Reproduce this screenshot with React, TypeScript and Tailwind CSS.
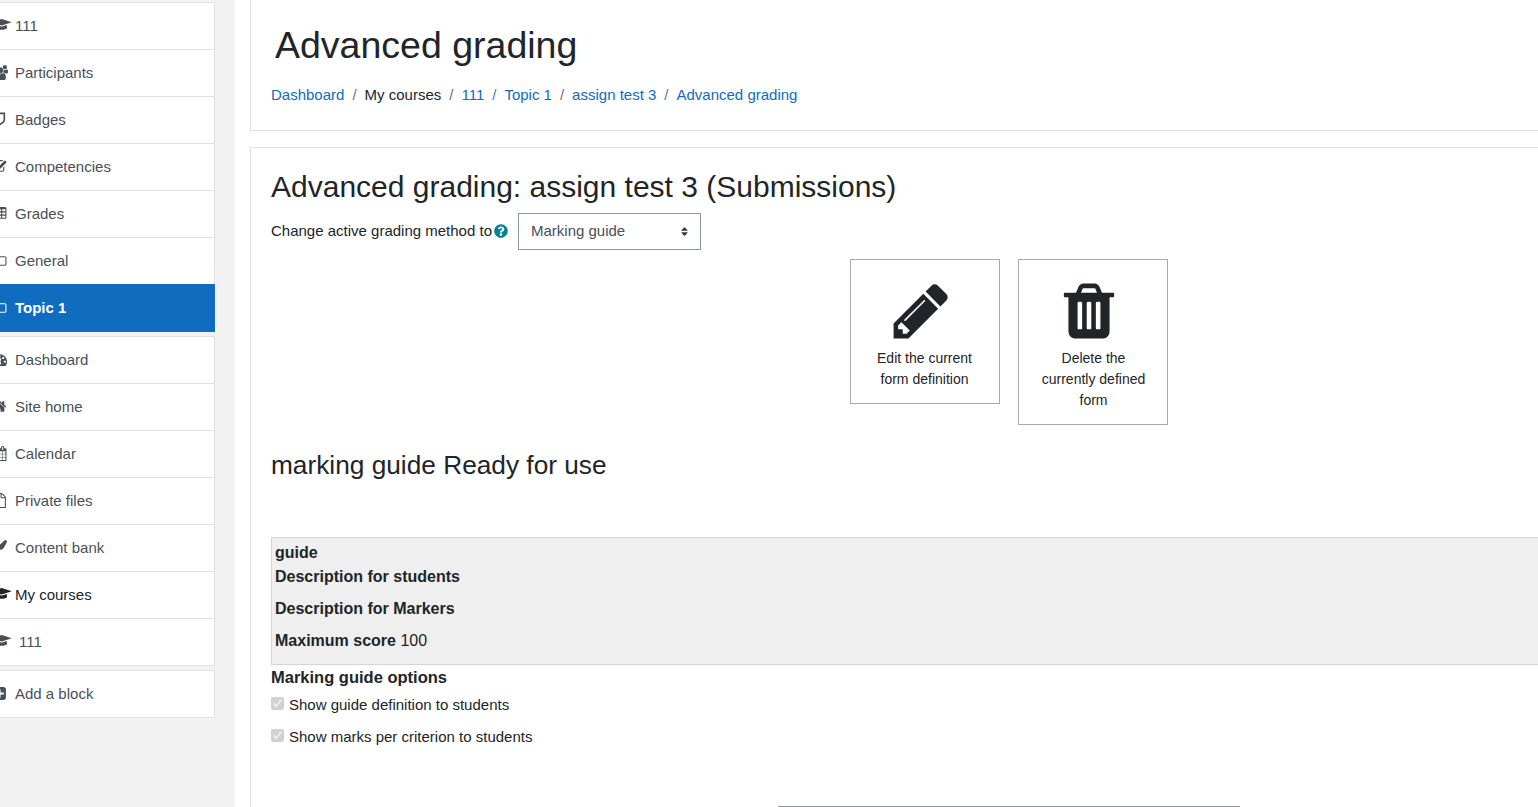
import { FaQuestionCircle, FaSort } from "react-icons/fa";

// glyphs keep the Font Awesome 4 grid (1792 high), w is the advance width
const glyphs: Record<string, { w: number; d: string }> = {
  cap: {
    w: 2304,
    d: "M1774 836l18 316q4 69-82 128t-235 93.5-323 34.5-323-34.5-235-93.5-82-128l18-316 574 181q22 7 48 7t48-7zm530-324q0 23-22 31l-1120 352q-4 1-10 1t-10-1l-652-206q-43 34-71 111.5t-34 178.5q63 36 63 109 0 69-58 107l58 433q2 14-8 25-9 11-24 11h-192q-15 0-24-11-10-11-8-25l58-433q-58-38-58-107 0-73 65-111 11-207 98-330l-333-104q-22-8-22-31t22-31l1120-352q4-1 10-1t10 1l1120 352q22 8 22 31z",
  },
  users: {
    w: 1920,
    d: "M593 896q-162 5-265 128h-134q-82 0-138-40.5t-56-118.5q0-353 124-353 6 0 43.5 21t97.5 42.5 119 21.5q67 0 133-23-5 37-5 66 0 139 81 256zm1071 637q0 120-73 189.5t-194 69.5h-874q-121 0-194-69.5t-73-189.5q0-53 3.5-103.5t14-109 26.5-108.5 43-97.5 62-81 85.5-53.5 111.5-20q10 0 43 21.5t73 48 107 48 135 21.5 135-21.5 107-48 73-48 43-21.5q61 0 111.5 20t85.5 53.5 62 81 43 97.5 26.5 108.5 14 109 3.5 103.5zm-1024-1277q0 106-75 181t-181 75-181-75-75-181 75-181 181-75 181 75 75 181zm704 384q0 159-112.5 271.5t-271.5 112.5-271.5-112.5-112.5-271.5 112.5-271.5 271.5-112.5 271.5 112.5 112.5 271.5zm576 225q0 78-56 118.5t-138 40.5h-134q-103-123-265-128 81-117 81-256 0-29-5-66 66 23 133 23 59 0 119-21.5t97.5-42.5 43.5-21q124 0 124 353zm-128-609q0 106-75 181t-181 75-181-75-75-181 75-181 181-75 181 75 75 181z",
  },
  shield: {
    w: 1792,
    d: "M1376 896v-640h-448v1137q119-63 213-137 235-184 235-360zm192-768v768q0 86-33.5 170.5t-83 150-118 127.5-126.5 103-121 77.5-89.5 49.5-42.5 20q-12 6-26 6t-26-6q-16-7-42.5-20t-89.5-49.5-121-77.5-126.5-103-118-127.5-83-150-33.5-170.5v-768q0-26 19-45t45-19h1152q26 0 45 19t19 45z",
  },
  check: {
    w: 1792,
    d: "M1472 930v318q0 119-84.5 203.5t-203.5 84.5h-832q-119 0-203.5-84.5t-84.5-203.5v-832q0-119 84.5-203.5t203.5-84.5h832q63 0 117 25 15 7 18 23 3 17-9 29l-49 49q-10 10-23 10-3 0-9-2-23-6-45-6h-832q-66 0-113 47t-47 113v832q0 66 47 113t113 47h832q66 0 113-47t47-113v-254q0-13 9-22l64-64q10-10 23-10 6 0 12 3 20 8 20 29zm231-489l-814 814q-24 24-57 24t-57-24l-430-430q-24-24-24-57t24-57l110-110q24-24 57-24t57 24l263 263 647-647q24-24 57-24t57 24l110 110q24 24 24 57t-24 57z",
  },
  table: {
    w: 1792,
    d: "M576 1376v-192q0-14-9-23t-23-9h-320q-14 0-23 9t-9 23v192q0 14 9 23t23 9h320q14 0 23-9t9-23zm0-384v-192q0-14-9-23t-23-9h-320q-14 0-23 9t-9 23v192q0 14 9 23t23 9h320q14 0 23-9t9-23zm512 384v-192q0-14-9-23t-23-9h-320q-14 0-23 9t-9 23v192q0 14 9 23t23 9h320q14 0 23-9t9-23zm-512-768v-192q0-14-9-23t-23-9h-320q-14 0-23 9t-9 23v192q0 14 9 23t23 9h320q14 0 23-9t9-23zm512 384v-192q0-14-9-23t-23-9h-320q-14 0-23 9t-9 23v192q0 14 9 23t23 9h320q14 0 23-9t9-23zm512 384v-192q0-14-9-23t-23-9h-320q-14 0-23 9t-9 23v192q0 14 9 23t23 9h320q14 0 23-9t9-23zm-512-768v-192q0-14-9-23t-23-9h-320q-14 0-23 9t-9 23v192q0 14 9 23t23 9h320q14 0 23-9t9-23zm512 384v-192q0-14-9-23t-23-9h-320q-14 0-23 9t-9 23v192q0 14 9 23t23 9h320q14 0 23-9t9-23zm0-384v-192q0-14-9-23t-23-9h-320q-14 0-23 9t-9 23v192q0 14 9 23t23 9h320q14 0 23-9t9-23zm128-320v1088q0 66-47 113t-113 47h-1344q-66 0-113-47t-47-113v-1088q0-66 47-113t113-47h1344q66 0 113 47t47 113z",
  },
  folder: {
    w: 1792,
    d: "M1600 1312v-704q0-40-28-68t-68-28h-704q-40 0-68-28t-28-68v-64q0-40-28-68t-68-28h-320q-40 0-68 28t-28 68v960q0 40 28 68t68 28h1216q40 0 68-28t28-68zm128-704v704q0 92-66 158t-158 66h-1216q-92 0-158-66t-66-158v-960q0-92 66-158t158-66h320q92 0 158 66t66 158v32h672q92 0 158 66t66 158z",
  },
  gauge: {
    w: 1792,
    d: "M384 1152q0-53-37.5-90.5t-90.5-37.5-90.5 37.5-37.5 90.5 37.5 90.5 90.5 37.5 90.5-37.5 37.5-90.5zm192-448q0-53-37.5-90.5t-90.5-37.5-90.5 37.5-37.5 90.5 37.5 90.5 90.5 37.5 90.5-37.5 37.5-90.5zm428 481l101-382q6-26-7.5-48.5t-38.5-29.5-48 6.5-30 39.5l-101 382q-60 5-107 43.5t-63 98.5q-20 77 20 146t117 89 146-20 89-117q16-60-6-117t-72-91zm660-33q0-53-37.5-90.5t-90.5-37.5-90.5 37.5-37.5 90.5 37.5 90.5 90.5 37.5 90.5-37.5 37.5-90.5zm-640-640q0-53-37.5-90.5t-90.5-37.5-90.5 37.5-37.5 90.5 37.5 90.5 90.5 37.5 90.5-37.5 37.5-90.5zm448 192q0-53-37.5-90.5t-90.5-37.5-90.5 37.5-37.5 90.5 37.5 90.5 90.5 37.5 90.5-37.5 37.5-90.5zm320 448q0 261-141 483-19 29-54 29h-1402q-35 0-54-29-141-221-141-483 0-182 71-348t191-286 286-191 348-71 348 71 286 191 191 286 71 348z",
  },
  home: {
    w: 1792,
    d: "M1472 992v480q0 26-19 45t-45 19h-384v-384h-256v384h-384q-26 0-45-19t-19-45v-480q0-1 .5-3t.5-3l575-474 575 474q1 2 1 6zm223-69l-62 74q-8 9-21 11h-3q-13 0-21-7l-692-577-692 577q-12 8-24 7-13-2-21-11l-62-74q-8-10-7-23.5t11-21.5l719-599q32-26 76-26t76 26l244 204v-195q0-14 9-23t23-9h192q14 0 23 9t9 23v408l219 182q10 8 11 21.5t-7 23.5z",
  },
  calendar: {
    w: 1792,
    d: "M192 1664h288v-288h-288v288zm352 0h320v-288h-320v288zm-352-352h288v-320h-288v320zm352 0h320v-320h-320v320zm-352-384h288v-288h-288v288zm736 736h320v-288h-320v288zm-384-736h320v-288h-320v288zm768 736h288v-288h-288v288zm-384-352h320v-320h-320v320zm-352-864v-288q0-13-9.5-22.5t-22.5-9.5h-64q-13 0-22.5 9.5t-9.5 22.5v288q0 13 9.5 22.5t22.5 9.5h64q13 0 22.5-9.5t9.5-22.5zm736 864h288v-320h-288v320zm-384-384h320v-288h-320v288zm384 0h288v-288h-288v288zm32-480v-288q0-13-9.5-22.5t-22.5-9.5h-64q-13 0-22.5 9.5t-9.5 22.5v288q0 13 9.5 22.5t22.5 9.5h64q13 0 22.5-9.5t9.5-22.5zm384-64v1280q0 52-38 90t-90 38h-1408q-52 0-90-38t-38-90v-1280q0-52 38-90t90-38h128v-96q0-66 47-113t113-47h64q66 0 113 47t47 113v96h384v-96q0-66 47-113t113-47h64q66 0 113 47t47 113v96h128q52 0 90 38t38 90z",
  },
  file: {
    w: 1792,
    d: "M1596 380q28 28 48 76t20 88v1152q0 40-28 68t-68 28h-1344q-40 0-68-28t-28-68v-1600q0-40 28-68t68-28h896q40 0 88 20t76 48zm-444-244v376h376q-10-29-22-41l-313-313q-12-12-41-22zm384 1528v-1024h-416q-40 0-68-28t-28-68v-416h-768v1536h1280z",
  },
  brush: {
    w: 1792,
    d: "M1615 0q70 0 122.5 46.5t52.5 116.5q0 63-45 151-332 629-465 752-97 91-218 91-126 0-216.5-92.5t-90.5-219.5q0-128 92-212l638-579q59-54 130-54zm-909 1034q39 76 106.5 130t150.5 76l1 71q4 213-129.5 347t-348.5 134q-123 0-218-46.5t-152.5-127.5-86.5-183-29-220q7 5 41 30t62 44.5 59 36.5 46 17q41 0 55-37 25-66 57.5-112.5t69.5-76 88-47.5 103-25.5 125-10.5z",
  },
  plus: {
    w: 1792,
    d: "M1408 960v-128q0-26-19-45t-45-19h-320v-320q0-26-19-45t-45-19h-128q-26 0-45 19t-19 45v320h-320q-26 0-45 19t-19 45v128q0 26 19 45t45 19h320v320q0 26 19 45t45 19h128q26 0 45-19t19-45v-320h320q26 0 45-19t19-45zm256-544v960q0 119-84.5 203.5t-203.5 84.5h-960q-119 0-203.5-84.5t-84.5-203.5v-960q0-119 84.5-203.5t203.5-84.5h960q119 0 203.5 84.5t84.5 203.5z",
  },
};

const Glyph = ({ name }: { name: string }) => {
  const g = glyphs[name];
  return (
    <svg
      viewBox={`0 0 ${g.w} 1792`}
      height={15}
      width={(g.w * 15) / 1792}
      fill="currentColor"
      className="shrink-0 -translate-y-[1px] overflow-visible"
    >
      <path d={g.d} />
    </svg>
  );
};

interface NavItem {
  label: string;
  icon: string;
  dark?: boolean;
  wide?: boolean;
}

const courseItems: NavItem[] = [
  { label: "111", icon: "cap" },
  { label: "Participants", icon: "users" },
  { label: "Badges", icon: "shield" },
  { label: "Competencies", icon: "check" },
  { label: "Grades", icon: "table" },
  { label: "General", icon: "folder" },
];

const siteItems: NavItem[] = [
  { label: "Dashboard", icon: "gauge" },
  { label: "Site home", icon: "home" },
  { label: "Calendar", icon: "calendar" },
  { label: "Private files", icon: "file" },
  { label: "Content bank", icon: "brush" },
  { label: "My courses", icon: "cap", dark: true },
  { label: "111", icon: "cap", wide: true },
];

const crumbs = ["Dashboard", "My courses", "111", "Topic 1", "assign test 3", "Advanced grading"];

const Row = ({ item }: { item: NavItem }) => (
  <div className="flex h-[47px] items-center border-b border-[#dee2e6] pl-[11px] text-[#495057] last:h-[46px] last:border-b-0">
    <span className={`flex shrink-0 ${item.wide ? "w-[27px]" : "w-[23px]"} ${item.dark ? "text-[#212529]" : ""}`}>
      <Glyph name={item.icon} />
    </span>
    <span className={item.dark ? "text-[#212529]" : ""}>{item.label}</span>
  </div>
);

const Sidebar = () => (
  <aside className="h-full w-[235px] shrink-0 overflow-hidden bg-[#f2f2f2] pt-[2px] text-[15px]">
    <div className="-ml-[20px] w-[235px]">
      <div className="border border-b-0 border-[#dee2e6] bg-white">
        {courseItems.map((item, i) => (
          <div key={i} className="flex h-[47px] items-center border-b border-[#dee2e6] pl-[11px] text-[#495057]">
            <span className="flex w-[23px] shrink-0">
              <Glyph name={item.icon} />
            </span>
            {item.label}
          </div>
        ))}
        <div className="-mx-px -mt-px flex h-[48px] items-center bg-[#0f6cbf] pl-[12px] font-bold text-white">
          <span className="flex w-[23px] shrink-0">
            <Glyph name="folder" />
          </span>
          Topic 1
        </div>
      </div>
      <div className="mt-[4px] border border-[#dee2e6] bg-white">
        {siteItems.map((item, i) => (
          <Row key={i} item={item} />
        ))}
      </div>
      <div className="mt-[4px] border border-[#dee2e6] bg-white">
        <div className="flex h-[46px] items-center pl-[11px] text-[#495057]">
          <span className="flex w-[23px] shrink-0">
            <Glyph name="plus" />
          </span>
          Add a block
        </div>
      </div>
    </div>
  </aside>
);

const PencilIcon = () => (
  <svg viewBox="0 0 1792 1792" className="h-[64px] w-[64px] -translate-x-[4px]" fill="#212529">
    <path d="M491 1536l91-91-235-235-91 91v107h128v128h107zm523-928q0-22-22-22-10 0-17 7l-542 542q-7 7-7 17 0 22 22 22 10 0 17-7l542-542q7-7 7-17zm-54-192l416 416-832 832h-416v-416zm683 96q0 53-37 90l-166 166-416-416 166-165q36-38 90-38 53 0 91 38l235 234q37 39 37 91z" />
  </svg>
);

const TrashIcon = () => (
  <svg viewBox="0 0 1792 1792" className="h-[64px] w-[64px] -translate-x-[5px]" fill="#212529">
    <path d="M704 1376v-704q0-14-9-23t-23-9h-64q-14 0-23 9t-9 23v704q0 14 9 23t23 9h64q14 0 23-9t9-23zm256 0v-704q0-14-9-23t-23-9h-64q-14 0-23 9t-9 23v704q0 14 9 23t23 9h64q14 0 23-9t9-23zm256 0v-704q0-14-9-23t-23-9h-64q-14 0-23 9t-9 23v704q0 14 9 23t23 9h64q14 0 23-9t9-23zm-544-992h448l-48-117q-7-9-17-11h-317q-10 2-17 11zm928 32v64q0 14-9 23t-23 9h-96v948q0 83-47 143.5t-113 60.5h-832q-66 0-113-58.5t-47-141.5v-952h-96q-14 0-23-9t-9-23v-64q0-14 9-23t23-9h309l70-167q15-37 54-63t79-26h320q40 0 79 26t54 63l70 167h309q14 0 23 9t9 23z" />
  </svg>
);

const App = () => {
  return (
    <div className="flex h-[807px] w-[1538px] overflow-hidden bg-white font-['Liberation_Sans',sans-serif] text-[#212529]">
      <Sidebar />
      <main className="ml-[15px] w-[1520px] shrink-0">
        <header className="h-[131px] border border-t-0 border-[#dee2e6] pl-[24px] pt-[23px]">
          <h1 className="text-[37.5px] leading-[45px]">Advanced grading</h1>
          <nav className="-ml-[4px] mt-[16px] flex items-center text-[15px] leading-[22px]">
            {crumbs.map((c, i) => (
              <span key={c} className="flex items-center">
                {i > 0 && <span className="px-[8px] text-[#6a737b]">/</span>}
                <span className={i === 1 ? "text-[#212529]" : "text-[#0f6cbf]"}>{c}</span>
              </span>
            ))}
          </nav>
        </header>

        <section className="mt-[16px] h-[700px] border border-[#dee2e6] px-[20px] pt-[21px]">
          <h2 className="text-[30px] leading-[36px]">Advanced grading: assign test 3 (Submissions)</h2>
          <div className="mt-[8px] flex items-center text-[15px]">
            <span>Change active grading method to</span>
            <FaQuestionCircle className="ml-[2px] h-[14px] w-[14px] -translate-y-[1px] text-[#008196]" />
            <div className="relative ml-[10px] h-[37px] w-[183px]">
              <select
                defaultValue="Marking guide"
                className="h-full w-full appearance-none border border-[#8f959e] bg-white pl-[12px] text-[15px] text-[#495057]"
              >
                <option>Marking guide</option>
              </select>
              <FaSort className="absolute right-[12px] top-[13px] h-[11px] w-[9px] text-[#343a40]" />
            </div>
          </div>

          <div className="mt-[9px] flex items-start justify-center gap-[18px] pr-[3px] text-center text-[14px] leading-[21px]">
            <div className="flex h-[145px] w-[150px] flex-col items-center border border-[#aaaaaa] px-[19px] pt-[19px]">
              <PencilIcon />
              <p className="mt-[5px]">Edit the current form definition</p>
            </div>
            <div className="flex h-[166px] w-[150px] flex-col items-center border border-[#aaaaaa] pl-[20px] pr-[18px] pt-[19px]">
              <TrashIcon />
              <p className="mt-[5px]">Delete the currently defined form</p>
            </div>
          </div>

          <h3 className="mt-[24px] text-[26.25px] leading-[32px]">marking guide Ready for use</h3>

          <div className="mt-[56px] h-[128px] border border-[#d5d5d5] bg-[#efefef] pl-[3px] pt-[4px] text-[16px]">
            <div className="font-bold leading-[22px]">guide</div>
            <div className="mt-[2px] font-bold leading-[22px]">Description for students</div>
            <div className="mt-[10px] font-bold leading-[22px]">Description for Markers</div>
            <div className="mt-[10px] leading-[22px]">
              <b>Maximum score</b> 100
            </div>
          </div>

          <h4 className="text-[16.5px] font-bold leading-[24px]">Marking guide options</h4>
          <label className="mt-[4px] flex h-[24px] items-center text-[15px]">
            <input type="checkbox" checked disabled readOnly className="-mt-[3px] mr-[5px] h-[13px] w-[13px]" />
            Show guide definition to students
          </label>
          <label className="mt-[8px] flex h-[24px] items-center text-[15px]">
            <input type="checkbox" checked disabled readOnly className="-mt-[3px] mr-[5px] h-[13px] w-[13px]" />
            Show marks per criterion to students
          </label>

          <div className="ml-[507px] mt-[57px] w-[462px] border-t border-[#8f959e]" />
        </section>
      </main>
    </div>
  );
};

export default App;
